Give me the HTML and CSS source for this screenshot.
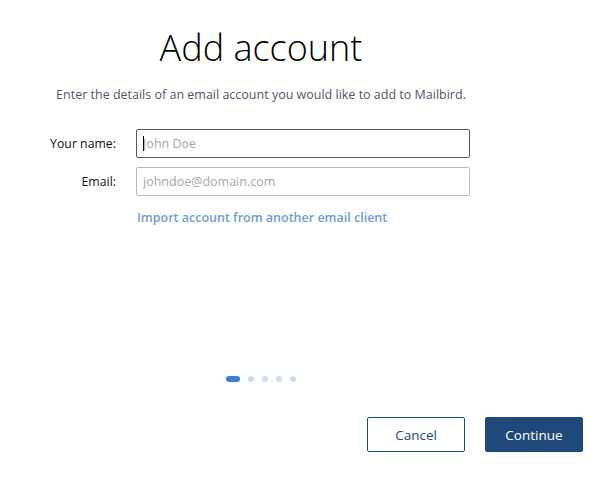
FILE: index.html
```html
<!DOCTYPE html>
<html lang="en">
<head>
<meta charset="utf-8">
<title>Add account</title>
<link rel="stylesheet" href="styles.css">
</head>
<body>
<div class="page">
  <main class="content">
    <h1 class="title">Add account</h1>
    <p class="subtitle">Enter the details of an email account you would like to add to Mailbird.</p>
    <form class="form">
      <label class="label" for="name">Your name:</label>
      <div class="field">
        <input class="input input-focused" id="name" type="text" placeholder="John Doe">
        <span class="caret"></span>
      </div>
      <label class="label" for="email">Email:</label>
      <div class="field">
        <input class="input" id="email" type="text" placeholder="johndoe@domain.com">
      </div>
      <span class="spacer"></span>
      <a class="import" href="#">Import account from another email client</a>
    </form>
  </main>
  <div class="dots">
    <span class="dot dot-active"></span>
    <span class="dot"></span>
    <span class="dot"></span>
    <span class="dot"></span>
    <span class="dot"></span>
  </div>
  <footer class="actions">
    <button class="btn btn-secondary" type="button">Cancel</button>
    <button class="btn btn-primary" type="button">Continue</button>
  </footer>
</div>
</body>
</html>
```

FILE: styles.css
```css
* { box-sizing: border-box; }
html, body { margin: 0; padding: 0; background: #ffffff; }
body { font-family: "Open Sans", "Noto Sans", sans-serif; }

.page {
  width: 610px;
  height: 478px;
  display: flex;
  flex-direction: column;
}

.content {
  width: 522px;
  display: flex;
  flex-direction: column;
  align-items: center;
  padding-top: 25px;
  flex: 1;
}

.title {
  margin: 0;
  font-family: "Open Sans", sans-serif;
  font-weight: 300;
  font-size: 36px;
  line-height: 46px;
  color: #000;
  letter-spacing: 0;
}

.subtitle {
  margin: 15px 0 0;
  font-size: 12.5px;
  line-height: 18px;
  color: #54546e;
}

.form {
  align-self: flex-start;
  margin-top: 25px;
  display: grid;
  grid-template-columns: 116px 334px;
  column-gap: 20px;
  row-gap: 9px;
  align-items: center;
}

.label {
  text-align: right;
  font-size: 12.3px;
  color: #111;
}

.field { position: relative; }

.input {
  display: block;
  width: 100%;
  height: 29px;
  border: 1px solid #b9b9b9;
  border-radius: 2px;
  padding: 0 6px;
  font-family: inherit;
  font-size: 12.5px;
  color: #333;
  outline: none;
  background: #fff;
}
.input::placeholder { color: #a6a6a6; }
.input-focused { border-color: #5b5b5b; }

.caret {
  position: absolute;
  left: 7px;
  top: 7px;
  width: 1px;
  height: 15px;
  background: #000;
}

.import {
  margin-top: 4px;
  margin-left: 1px;
  font-size: 12.5px;
  color: #6e9dd2;
  text-decoration: none;
  font-weight: 600;
}

.dots {
  display: flex;
  gap: 8px;
  padding-left: 226px;
  align-items: center;
  height: 6px;
  margin-bottom: 35px;
}
.dot {
  width: 6px;
  height: 6px;
  border-radius: 3px;
  background: #c9dcf4;
}
.dot-active {
  width: 14px;
  background: #3c7fd6;
}

.actions {
  display: flex;
  justify-content: flex-end;
  gap: 20px;
  padding-right: 27px;
  padding-bottom: 26px;
}

.btn {
  width: 98px;
  height: 35px;
  border-radius: 2px;
  font-family: inherit;
  font-size: 13.5px;
  cursor: pointer;
}
.btn-secondary {
  background: #fff;
  border: 1px solid #1f4a7c;
  color: #1f4a7c;
}
.btn-primary {
  background: #1f497a;
  border: 1px solid #1f497a;
  color: #fff;
  font-weight: 500;
}
```
